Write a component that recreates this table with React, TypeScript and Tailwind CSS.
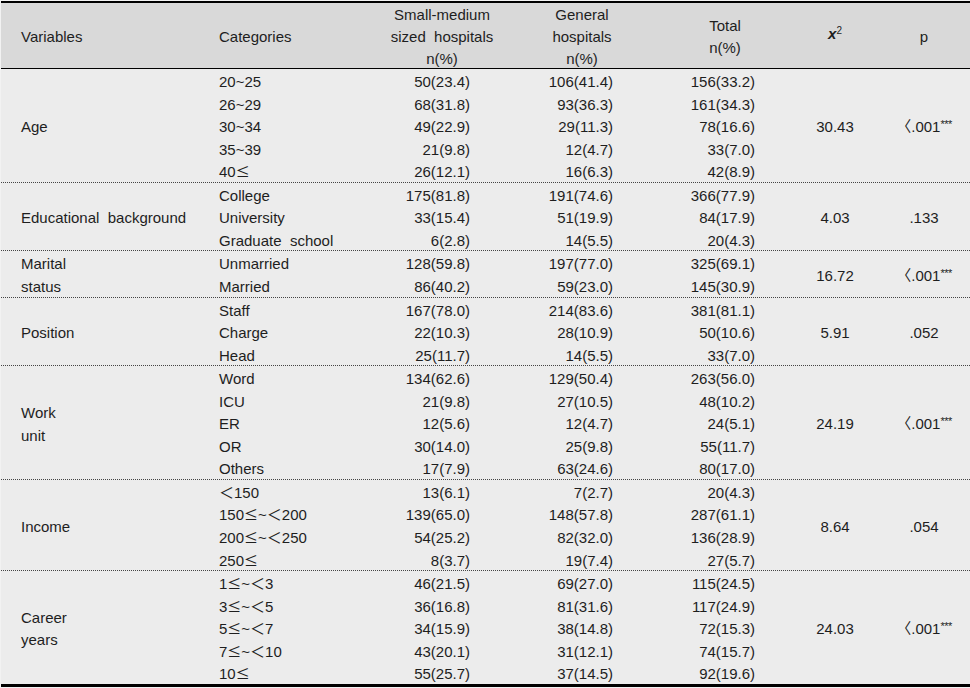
type Row = [string, string, string, string];

interface Group {
  label: string[];
  rows: Row[];
  chi: string;
  p: string;
  star?: boolean;
}

const groups: Group[] = [
  {
    label: ["Age"],
    rows: [
      ["20~25", "50(23.4)", "106(41.4)", "156(33.2)"],
      ["26~29", "68(31.8)", "93(36.3)", "161(34.3)"],
      ["30~34", "49(22.9)", "29(11.3)", "78(16.6)"],
      ["35~39", "21(9.8)", "12(4.7)", "33(7.0)"],
      ["40≤", "26(12.1)", "16(6.3)", "42(8.9)"],
    ],
    chi: "30.43",
    p: "〈.001",
    star: true,
  },
  {
    label: ["Educational  background"],
    rows: [
      ["College", "175(81.8)", "191(74.6)", "366(77.9)"],
      ["University", "33(15.4)", "51(19.9)", "84(17.9)"],
      ["Graduate  school", "6(2.8)", "14(5.5)", "20(4.3)"],
    ],
    chi: "4.03",
    p: ".133",
  },
  {
    label: ["Marital", "status"],
    rows: [
      ["Unmarried", "128(59.8)", "197(77.0)", "325(69.1)"],
      ["Married", "86(40.2)", "59(23.0)", "145(30.9)"],
    ],
    chi: "16.72",
    p: "〈.001",
    star: true,
  },
  {
    label: ["Position"],
    rows: [
      ["Staff", "167(78.0)", "214(83.6)", "381(81.1)"],
      ["Charge", "22(10.3)", "28(10.9)", "50(10.6)"],
      ["Head", "25(11.7)", "14(5.5)", "33(7.0)"],
    ],
    chi: "5.91",
    p: ".052",
  },
  {
    label: ["Work", "unit"],
    rows: [
      ["Word", "134(62.6)", "129(50.4)", "263(56.0)"],
      ["ICU", "21(9.8)", "27(10.5)", "48(10.2)"],
      ["ER", "12(5.6)", "12(4.7)", "24(5.1)"],
      ["OR", "30(14.0)", "25(9.8)", "55(11.7)"],
      ["Others", "17(7.9)", "63(24.6)", "80(17.0)"],
    ],
    chi: "24.19",
    p: "〈.001",
    star: true,
  },
  {
    label: ["Income"],
    rows: [
      ["＜150", "13(6.1)", "7(2.7)", "20(4.3)"],
      ["150≤~＜200", "139(65.0)", "148(57.8)", "287(61.1)"],
      ["200≤~＜250", "54(25.2)", "82(32.0)", "136(28.9)"],
      ["250≤", "8(3.7)", "19(7.4)", "27(5.7)"],
    ],
    chi: "8.64",
    p: ".054",
  },
  {
    label: ["Career", "years"],
    rows: [
      ["1≤~＜3", "46(21.5)", "69(27.0)", "115(24.5)"],
      ["3≤~＜5", "36(16.8)", "81(31.6)", "117(24.9)"],
      ["5≤~＜7", "34(15.9)", "38(14.8)", "72(15.3)"],
      ["7≤~＜10", "43(20.1)", "31(12.1)", "74(15.7)"],
      ["10≤", "55(25.7)", "37(14.5)", "92(19.6)"],
    ],
    chi: "24.03",
    p: "〈.001",
    star: true,
  },
];

// the ≤ in the original is the wide CJK glyph
function Category({ text }: { text: string }) {
  const parts = text.split("≤");
  return (
    <>
      {parts.map((part, i) => (
        <span key={i}>
          {i > 0 && <span className="font-['Noto_Sans_CJK_KR',sans-serif] text-[14px] leading-none">≤</span>}
          {part}
        </span>
      ))}
    </>
  );
}

function PValue({ p, star }: { p: string; star?: boolean }) {
  return (
    <span className="whitespace-nowrap">
      {p}
      {star && <span className="relative -top-[4px] text-[11px] tracking-[-0.5px]">***</span>}
    </span>
  );
}

export default function App() {
  return (
    <div className="w-[970px] h-[688px] overflow-hidden bg-[#f2f2f2] pt-px pl-px font-['Liberation_Sans','Noto_Sans_CJK_KR',sans-serif] text-[15px] text-[#1e1e1e]">
      <div className="border-t-2 border-black bg-[#d9d9d9]">
        <div className="flex h-[66px] border-b border-black pt-[2px] leading-[22px]">
          <div className="flex w-[204px] items-center pl-[20px]">Variables</div>
          <div className="flex w-[179px] items-center pl-[14px]">Categories</div>
          <div className="flex w-[116px] flex-col items-center justify-center text-center">
            <span>Small-medium</span>
            <span className="whitespace-pre">sized  hospitals</span>
            <span>n(%)</span>
          </div>
          <div className="flex w-[164px] flex-col items-center justify-center text-center">
            <span>General</span>
            <span>hospitals</span>
            <span>n(%)</span>
          </div>
          <div className="flex w-[122px] flex-col items-center justify-center text-center">
            <span>Total</span>
            <span>n(%)</span>
          </div>
          <div className="flex w-[98px] items-center justify-center pb-[6px]">
            <span className="font-bold italic">
              x<sup className="text-[10px] font-normal not-italic">2</sup>
            </span>
          </div>
          <div className="flex w-[80px] items-center justify-center">p</div>
        </div>
      </div>

      <div className="h-[615px] bg-[#ececec]">
        {groups.map((g, gi) => (
          <div
            key={gi}
            className={gi > 0 ? "flex border-t border-dotted border-[#444]" : "flex"}
          >
            <div className="flex w-[204px] flex-col justify-center pl-[20px] pt-[2px] -mb-[2px] leading-[22.56px]">
              {g.label.map((l) => (
                <span key={l} className="whitespace-pre">
                  {l}
                </span>
              ))}
            </div>
            <div className="flex flex-col">
              {g.rows.map((r) => (
                <div key={r[0]} className="flex h-[22.56px] items-center pt-[4px]">
                  <div className="w-[179px] whitespace-pre pl-[14px]">
                    <Category text={r[0]} />
                  </div>
                  <div className="w-[116px] pr-[30px] text-right">{r[1]}</div>
                  <div className="w-[164px] pr-[51px] text-right">{r[2]}</div>
                  <div className="w-[122px] pr-[31px] text-right">{r[3]}</div>
                </div>
              ))}
            </div>
            <div className="flex w-[98px] items-center justify-center pt-[4px]">{g.chi}</div>
            <div className="flex w-[80px] items-center justify-center pt-[4px]">
              <PValue p={g.p} star={g.star} />
            </div>
          </div>
        ))}
      </div>
      <div className="h-[3px] bg-black" />
    </div>
  );
}
